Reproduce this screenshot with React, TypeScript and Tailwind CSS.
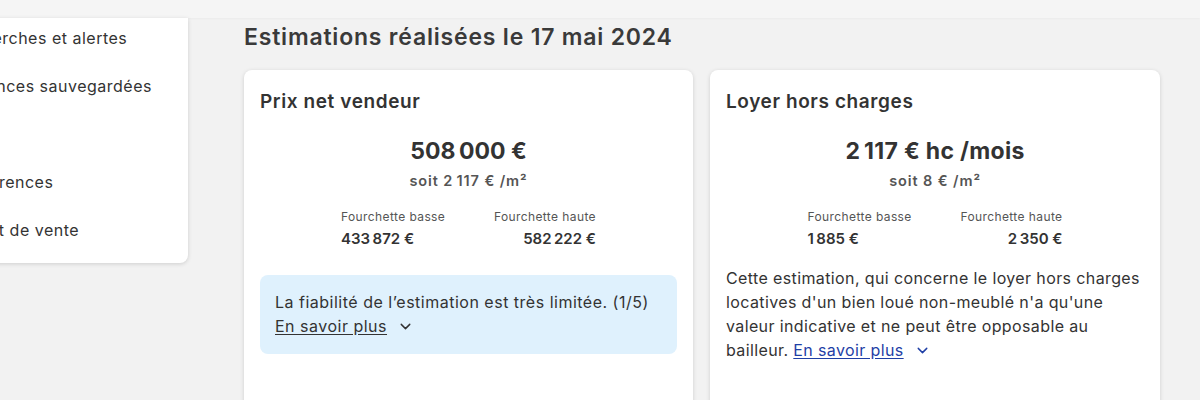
import { ChevronDown } from "lucide-react";

const NNBSP = "\u202f";

function Range({ low, high }: { low: string; high: string }) {
  return (
    <div className="mx-auto mt-[18px] flex w-[255px] justify-between">
      <div className="flex flex-col">
        <span className="text-[12px] leading-4 tracking-[0.4px] text-[#555]">Fourchette basse</span>
        <span className="mt-1 text-[15px] font-semibold leading-5 tracking-[0.3px] text-[#333]">{low}</span>
      </div>
      <div className="flex flex-col items-end">
        <span className="text-[12px] leading-4 tracking-[0.4px] text-[#555]">Fourchette haute</span>
        <span className="mt-1 text-[15px] font-semibold leading-5 tracking-[0.3px] text-[#333]">{high}</span>
      </div>
    </div>
  );
}

export default function App() {
  const menu = [
    "Mes recherches et alertes",
    "Mes annonces sauvegardées",
    "Profil",
    "Mes préférences",
    "Mon projet de vente",
  ];

  return (
    <div
      className="flex h-[400px] w-[1200px] flex-col overflow-hidden bg-[#f2f2f2] text-[#333]"
      style={{ fontFamily: "Inter, 'Open Sans', sans-serif" }}
    >
      <div className="h-[18px] shrink-0 bg-[#f5f5f5] shadow-[0_1px_2px_rgba(0,0,0,0.03)]" />

      <div className="flex items-start">
        {/* Sidebar (partly off-screen) */}
        <nav className="ml-[-106px] w-[294px] shrink-0 rounded-br-lg bg-white pb-[5px] shadow-[0_1px_4px_rgba(0,0,0,0.15)]">
          {menu.map((item) => (
            <div key={item} className="h-12 pl-6 pt-[10px] text-[16px] leading-5 tracking-[0.5px] text-[#333]">
              {item}
            </div>
          ))}
        </nav>

        <main className="ml-[56px] flex flex-col">
          <h1 className="mt-[5px] text-[23px] font-semibold leading-7 tracking-[0.8px] text-[#3a3a3a]">
            Estimations réalisées le 17 mai 2024
          </h1>

          <div className="mt-[19px] flex gap-[17px]">
            {/* Prix net vendeur */}
            <section className="h-[360px] w-[449px] rounded-lg bg-white px-4 pt-5 shadow-[0_1px_4px_rgba(0,0,0,0.15)]">
              <h2 className="text-[19px] font-semibold leading-6 tracking-[0.6px] text-[#333]">Prix net vendeur</h2>
              <p className="mt-[21px] text-center text-[23px] font-bold leading-8 tracking-[0.3px] text-[#333]">
                508{NNBSP}000 €
              </p>
              <p className="mt-1 text-center text-[14.5px] font-semibold leading-5 tracking-[0.9px] text-[#555]">
                soit 2{NNBSP}117 € /m²
              </p>
              <Range low={`433${NNBSP}872 €`} high={`582${NNBSP}222 €`} />
              <div className="mt-[26px] rounded-lg bg-[#dff1fd] px-[15px] pt-[15px] pb-4 text-[16px] leading-6 tracking-[0.5px] text-[#333]">
                <p>La fiabilité de l’estimation est très limitée. (1/5)</p>
                <button className="text-[#333]">
                  <span className="underline underline-offset-2">En savoir plus</span>
                  <ChevronDown size={17} strokeWidth={2} className="ml-[10px] inline-block align-[-3px]" />
                </button>
              </div>
            </section>

            {/* Loyer hors charges */}
            <section className="h-[360px] w-[450px] rounded-lg bg-white px-4 pt-5 shadow-[0_1px_4px_rgba(0,0,0,0.15)]">
              <h2 className="text-[19px] font-semibold leading-6 tracking-[0.6px] text-[#333]">Loyer hors charges</h2>
              <p className="mt-[21px] text-center text-[23px] font-bold leading-8 tracking-[0.3px] text-[#333]">
                2{NNBSP}117 € hc /mois
              </p>
              <p className="mt-1 text-center text-[14.5px] font-semibold leading-5 tracking-[0.9px] text-[#555]">
                soit 8 € /m²
              </p>
              <Range low={`1${NNBSP}885 €`} high={`2${NNBSP}350 €`} />
              <p className="mt-[17px] text-[16px] leading-6 tracking-[0.38px] text-[#333]">
                Cette estimation, qui concerne le loyer hors charges locatives d'un bien loué
                non-meublé n'a qu'une valeur indicative et ne peut être opposable au bailleur.{" "}
                <button className="text-[#1f3fa6]">
                  <span className="underline underline-offset-2">En savoir plus</span>
                  <ChevronDown size={17} strokeWidth={2} className="ml-[10px] inline-block align-[-3px]" />
                </button>
              </p>
            </section>
          </div>
        </main>
      </div>
    </div>
  );
}
